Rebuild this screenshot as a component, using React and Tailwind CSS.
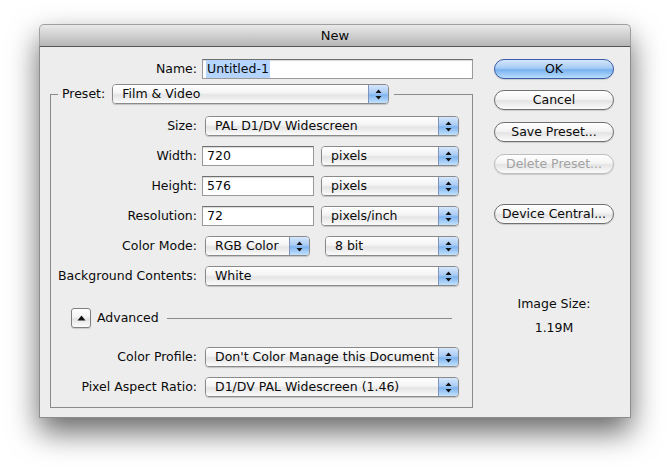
import React from 'react';

const aqua = 'bg-[linear-gradient(to_bottom,#ffffff_0%,#f4f4f4_45%,#e4e4e4_55%,#fbfbfb_100%)]';

function Arrows() {
  return (
    <svg width="7" height="11" viewBox="0 0 7 11">
      <path d="M3.5 0.5 L6.5 4 L0.5 4 Z" fill="#111" />
      <path d="M3.5 10.5 L6.5 7 L0.5 7 Z" fill="#111" />
    </svg>
  );
}

function Popup({ value, w, className = '' }) {
  return (
    <div className={`h-[20px] ${w} flex shrink-0 rounded-[4px] border border-[#8a8a8a] overflow-hidden shadow-[0_1px_1px_rgba(0,0,0,0.18)] ${className}`}>
      <div className={`flex-1 flex items-center pl-[9px] whitespace-nowrap ${aqua}`}>{value}</div>
      <div className="w-[20px] flex items-center justify-center border-l border-[#7d93bd] bg-[linear-gradient(to_bottom,#d5e7fc_0%,#a9cbf4_45%,#7fb4ef_55%,#c3e2fd_100%)]">
        <Arrows />
      </div>
    </div>
  );
}

function Field({ value, w }) {
  return (
    <div className={`h-[20px] ${w} shrink-0 flex items-center pl-[4px] bg-white border border-[#9a9a9a] border-t-[#6e6e6e] shadow-[inset_0_1px_1px_rgba(0,0,0,0.15)]`}>
      {value}
    </div>
  );
}

function Button({ children, primary, disabled, className = '' }) {
  let look = `border-[#707070] ${aqua}`;
  if (primary) look = 'border-[#3a5ca8] bg-[linear-gradient(to_bottom,#d4e6fb_0%,#a6cbf4_45%,#79b1ef_55%,#b9defd_100%)]';
  if (disabled) look = `border-[#bdbdbd] text-[#a3a3a3] ${aqua}`;
  return (
    <div className={`w-[120px] h-[20px] rounded-full border flex items-center justify-center shadow-[0_1px_1px_rgba(0,0,0,0.15)] ${look} ${className}`}>
      {children}
    </div>
  );
}

function Row({ label, children }) {
  return (
    <div className="flex items-center h-[20px]">
      <div className="w-[147px] shrink-0 text-right pr-[1px] whitespace-nowrap">{label}</div>
      <div className="flex items-center ml-[4px]">{children}</div>
    </div>
  );
}

export default function App() {
  return (
    <div className="min-h-screen bg-white pt-[24px] pl-[39px] font-['DejaVu_Sans',sans-serif] text-[12.5px] text-[#0a0a0a]">
      <div className="w-[592px] rounded-t-[5px] shadow-[0_14px_30px_rgba(0,0,0,0.6)]">
        <div className="h-[23px] rounded-t-[5px] border border-[#a0a0a0] border-b-[#555555] bg-[linear-gradient(to_bottom,#e9e9e9,#b6b6b6)] flex items-center justify-center text-[13px]">
          New
        </div>
        <div className="h-[371px] bg-[#ededed] border-x border-b border-[#8c8c8c] flex">
          {/* left column */}
          <div className="w-[433px] shrink-0 pt-[12px]">
            <div className="flex items-center h-[20px]">
              <div className="w-[157px] text-right">Name:</div>
              <div className="ml-[5px]">
                <Field
                  w="w-[271px]"
                  value={<span className="bg-[#b5d5ff] pl-[1px] pr-[1px] -ml-[1px]">Untitled-1</span>}
                />
              </div>
            </div>

            <div className="ml-[10px] w-[423px] mt-[5px]">
              <div className="flex h-[20px]">
                <div className="w-[8px] mt-[10px] border-t border-l border-[#8a8a8a]" />
                <div className="flex items-center pl-[4px]">
                  <span>Preset:</span>
                  <Popup value="Film & Video" w="w-[277px]" className="ml-[7px]" />
                </div>
                <div className="flex-1 ml-[5px] mt-[10px] border-t border-r border-[#8a8a8a]" />
              </div>

              <div className="border-x border-b border-[#8a8a8a] pt-[12px] pb-[10px]">
                <div className="flex flex-col gap-[10px]">
                  <Row label="Size:">
                    <Popup value="PAL D1/DV Widescreen" w="w-[254px]" className="ml-[3px]" />
                  </Row>
                  <Row label="Width:">
                    <Field value="720" w="w-[112px]" />
                    <Popup value="pixels" w="w-[138px]" className="ml-[7px]" />
                  </Row>
                  <Row label="Height:">
                    <Field value="576" w="w-[112px]" />
                    <Popup value="pixels" w="w-[138px]" className="ml-[7px]" />
                  </Row>
                  <Row label="Resolution:">
                    <Field value="72" w="w-[112px]" />
                    <Popup value="pixels/inch" w="w-[138px]" className="ml-[7px]" />
                  </Row>
                  <Row label="Color Mode:">
                    <Popup value="RGB Color" w="w-[105px]" className="ml-[3px]" />
                    <Popup value="8 bit" w="w-[134px]" className="ml-[15px]" />
                  </Row>
                  <Row label="Background Contents:">
                    <Popup value="White" w="w-[254px]" className="ml-[3px]" />
                  </Row>
                </div>

                <div className="flex items-center h-[20px] mt-[22px] ml-[20px] mr-[20px]">
                  <div className={`w-[20px] h-[20px] rounded-[3px] border border-[#808080] flex items-center justify-center shadow-[0_1px_1px_rgba(0,0,0,0.15)] ${aqua}`}>
                    <svg width="9" height="6" viewBox="0 0 9 6">
                      <path d="M4.5 0.5 L8.5 5.5 L0.5 5.5 Z" fill="#111" />
                    </svg>
                  </div>
                  <span className="ml-[6px]">Advanced</span>
                  <div className="flex-1 ml-[8px] h-px bg-[#8a8a8a]" />
                </div>

                <div className="flex flex-col gap-[10px] mt-[19px]">
                  <Row label="Color Profile:">
                    <Popup value="Don't Color Manage this Document" w="w-[254px]" className="ml-[3px]" />
                  </Row>
                  <Row label="Pixel Aspect Ratio:">
                    <Popup value="D1/DV PAL Widescreen (1.46)" w="w-[254px]" className="ml-[3px]" />
                  </Row>
                </div>
              </div>
            </div>
          </div>

          {/* right column */}
          <div className="ml-[21px] pt-[12px] flex flex-col w-[120px]">
            <Button primary>OK</Button>
            <Button className="mt-[11px]">Cancel</Button>
            <Button className="mt-[12px]">Save Preset...</Button>
            <Button disabled className="mt-[12px]">Delete Preset...</Button>
            <Button className="mt-[30px]">Device Central...</Button>
            <div className="mt-[72px] text-center leading-[16px]">Image Size:</div>
            <div className="mt-[8px] text-center leading-[16px]">1.19M</div>
          </div>
        </div>
      </div>
    </div>
  );
}
